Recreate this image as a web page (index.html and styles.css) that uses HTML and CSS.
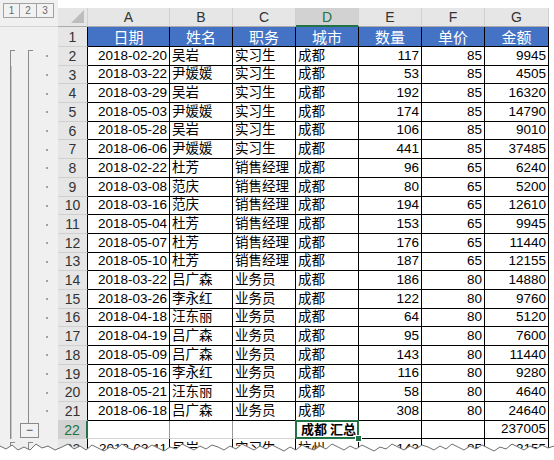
FILE: index.html
```html
<!DOCTYPE html>
<html lang="zh-CN">
<head>
<meta charset="utf-8">
<title>Sheet</title>
<link rel="stylesheet" href="styles.css">
</head>
<body>
<div class="frame">
<div class="sheet">
  <div class="ol-top">
    <div class="levels"><span class="lv">1</span><span class="lv">2</span><span class="lv">3</span></div>
  </div>
  <div class="strip"></div>
  <div class="corner"><span class="tri"></span></div>
  <div class="ch">A</div><div class="ch">B</div><div class="ch">C</div><div class="ch sel">D</div><div class="ch">E</div><div class="ch">F</div><div class="ch">G</div>

  <div class="ol ol-plain"></div><div class="rh">1</div>
  <div class="h">日期</div><div class="h">姓名</div><div class="h">职务</div><div class="h">城市</div><div class="h">数量</div><div class="h">单价</div><div class="h">金额</div>

  <div class="ol first"><i class="dot"></i></div><div class="rh">2</div>
  <div class="c r">2018-02-20</div><div class="c">吴岩</div><div class="c">实习生</div><div class="c">成都</div><div class="c r">117</div><div class="c r">85</div><div class="c r">9945</div>

  <div class="ol"><i class="dot"></i></div><div class="rh">3</div>
  <div class="c r">2018-03-22</div><div class="c">尹媛媛</div><div class="c">实习生</div><div class="c">成都</div><div class="c r">53</div><div class="c r">85</div><div class="c r">4505</div>

  <div class="ol"><i class="dot"></i></div><div class="rh">4</div>
  <div class="c r">2018-03-29</div><div class="c">吴岩</div><div class="c">实习生</div><div class="c">成都</div><div class="c r">192</div><div class="c r">85</div><div class="c r">16320</div>

  <div class="ol"><i class="dot"></i></div><div class="rh">5</div>
  <div class="c r">2018-05-03</div><div class="c">尹媛媛</div><div class="c">实习生</div><div class="c">成都</div><div class="c r">174</div><div class="c r">85</div><div class="c r">14790</div>

  <div class="ol"><i class="dot"></i></div><div class="rh">6</div>
  <div class="c r">2018-05-28</div><div class="c">吴岩</div><div class="c">实习生</div><div class="c">成都</div><div class="c r">106</div><div class="c r">85</div><div class="c r">9010</div>

  <div class="ol"><i class="dot"></i></div><div class="rh">7</div>
  <div class="c r">2018-06-06</div><div class="c">尹媛媛</div><div class="c">实习生</div><div class="c">成都</div><div class="c r">441</div><div class="c r">85</div><div class="c r">37485</div>

  <div class="ol"><i class="dot"></i></div><div class="rh">8</div>
  <div class="c r">2018-02-22</div><div class="c">杜芳</div><div class="c">销售经理</div><div class="c">成都</div><div class="c r">96</div><div class="c r">65</div><div class="c r">6240</div>

  <div class="ol"><i class="dot"></i></div><div class="rh">9</div>
  <div class="c r">2018-03-08</div><div class="c">范庆</div><div class="c">销售经理</div><div class="c">成都</div><div class="c r">80</div><div class="c r">65</div><div class="c r">5200</div>

  <div class="ol"><i class="dot"></i></div><div class="rh">10</div>
  <div class="c r">2018-03-16</div><div class="c">范庆</div><div class="c">销售经理</div><div class="c">成都</div><div class="c r">194</div><div class="c r">65</div><div class="c r">12610</div>

  <div class="ol"><i class="dot"></i></div><div class="rh">11</div>
  <div class="c r">2018-05-04</div><div class="c">杜芳</div><div class="c">销售经理</div><div class="c">成都</div><div class="c r">153</div><div class="c r">65</div><div class="c r">9945</div>

  <div class="ol"><i class="dot"></i></div><div class="rh">12</div>
  <div class="c r">2018-05-07</div><div class="c">杜芳</div><div class="c">销售经理</div><div class="c">成都</div><div class="c r">176</div><div class="c r">65</div><div class="c r">11440</div>

  <div class="ol"><i class="dot"></i></div><div class="rh">13</div>
  <div class="c r">2018-05-10</div><div class="c">杜芳</div><div class="c">销售经理</div><div class="c">成都</div><div class="c r">187</div><div class="c r">65</div><div class="c r">12155</div>

  <div class="ol"><i class="dot"></i></div><div class="rh">14</div>
  <div class="c r">2018-03-22</div><div class="c">吕广森</div><div class="c">业务员</div><div class="c">成都</div><div class="c r">186</div><div class="c r">80</div><div class="c r">14880</div>

  <div class="ol"><i class="dot"></i></div><div class="rh">15</div>
  <div class="c r">2018-03-26</div><div class="c">李永红</div><div class="c">业务员</div><div class="c">成都</div><div class="c r">122</div><div class="c r">80</div><div class="c r">9760</div>

  <div class="ol"><i class="dot"></i></div><div class="rh">16</div>
  <div class="c r">2018-04-18</div><div class="c">汪东丽</div><div class="c">业务员</div><div class="c">成都</div><div class="c r">64</div><div class="c r">80</div><div class="c r">5120</div>

  <div class="ol"><i class="dot"></i></div><div class="rh">17</div>
  <div class="c r">2018-04-19</div><div class="c">吕广森</div><div class="c">业务员</div><div class="c">成都</div><div class="c r">95</div><div class="c r">80</div><div class="c r">7600</div>

  <div class="ol"><i class="dot"></i></div><div class="rh">18</div>
  <div class="c r">2018-05-09</div><div class="c">吕广森</div><div class="c">业务员</div><div class="c">成都</div><div class="c r">143</div><div class="c r">80</div><div class="c r">11440</div>

  <div class="ol"><i class="dot"></i></div><div class="rh">19</div>
  <div class="c r">2018-05-16</div><div class="c">李永红</div><div class="c">业务员</div><div class="c">成都</div><div class="c r">116</div><div class="c r">80</div><div class="c r">9280</div>

  <div class="ol"><i class="dot"></i></div><div class="rh">20</div>
  <div class="c r">2018-05-21</div><div class="c">汪东丽</div><div class="c">业务员</div><div class="c">成都</div><div class="c r">58</div><div class="c r">80</div><div class="c r">4640</div>

  <div class="ol"><i class="dot"></i></div><div class="rh">21</div>
  <div class="c r">2018-06-18</div><div class="c">吕广森</div><div class="c">业务员</div><div class="c">成都</div><div class="c r">308</div><div class="c r">80</div><div class="c r">24640</div>

  <div class="ol ol-end"><span class="minus">−</span></div><div class="rh rh-sel">22</div>
  <div class="c g"></div><div class="c g"></div><div class="c g"></div><div class="c active"><b>成都 汇总</b><span class="handle"></span></div><div class="c"></div><div class="c"></div><div class="c r">237005</div>

  <div class="ol first"><i class="dot"></i></div><div class="rh">23</div>
  <div class="c r">2018-03-11</div><div class="c">吴岩</div><div class="c">实习生</div><div class="c">杭州</div><div class="c r">143</div><div class="c r">85</div><div class="c r">12155</div>
</div>
<svg class="tear" width="554" height="22" viewBox="0 0 554 22">
  <path class="tear-fill" d="M0 8 L6 11 L12 7 L18 12 L24 9 L30 12 L36 6 L42 10 L48 8 L55 12 L62 9 L68 6 L74 11 L80 8 L86 12 L92 7 L98 10 L104 13 L110 9 L116 11 L122 6 L128 10 L134 12 L140 8 L146 11 L152 7 L158 10 L164 13 L170 9 L176 11 L182 6 L188 9 L194 12 L200 8 L206 11 L212 7 L218 9 L224 12 L230 8 L236 11 L242 6 L248 9 L254 12 L260 8 L266 11 L272 7 L278 10 L284 13 L290 9 L296 12 L302 7 L308 10 L314 12 L320 8 L326 11 L332 6 L338 9 L344 12 L350 8 L356 11 L362 7 L368 10 L374 13 L380 9 L386 11 L392 6 L398 9 L404 12 L410 8 L416 11 L422 7 L428 9 L434 12 L440 8 L446 11 L452 6 L458 9 L464 12 L470 8 L476 11 L482 7 L488 10 L494 13 L500 9 L506 11 L512 6 L518 9 L524 12 L530 8 L536 11 L542 7 L548 10 L554 8 L554 22 L0 22 Z"/>
  <path class="tear-line" d="M0 8 L6 11 L12 7 L18 12 L24 9 L30 12 L36 6 L42 10 L48 8 L55 12 L62 9 L68 6 L74 11 L80 8 L86 12 L92 7 L98 10 L104 13 L110 9 L116 11 L122 6 L128 10 L134 12 L140 8 L146 11 L152 7 L158 10 L164 13 L170 9 L176 11 L182 6 L188 9 L194 12 L200 8 L206 11 L212 7 L218 9 L224 12 L230 8 L236 11 L242 6 L248 9 L254 12 L260 8 L266 11 L272 7 L278 10 L284 13 L290 9 L296 12 L302 7 L308 10 L314 12 L320 8 L326 11 L332 6 L338 9 L344 12 L350 8 L356 11 L362 7 L368 10 L374 13 L380 9 L386 11 L392 6 L398 9 L404 12 L410 8 L416 11 L422 7 L428 9 L434 12 L440 8 L446 11 L452 6 L458 9 L464 12 L470 8 L476 11 L482 7 L488 10 L494 13 L500 9 L506 11 L512 6 L518 9 L524 12 L530 8 L536 11 L542 7 L548 10 L554 8"/>
</svg>
</div>
</body>
</html>
```

FILE: styles.css
```css
html, body {
  margin: 0;
  padding: 0;
  background: #ffffff;
}

.frame {
  position: relative;
  width: 554px;
  height: 460px;
  overflow: hidden;
  background: #ffffff;
}

.sheet {
  display: grid;
  grid-template-columns: 58px 30px 82px 63px 63px 63px 63px 63px 64px;
  grid-template-rows: 8px 19px 20px repeat(21, 18.7px) 20px;
  font-family: "Liberation Sans", "Noto Sans CJK SC", sans-serif;
  font-size: 13.5px;
  color: #000;
}

.sheet > div {
  box-sizing: border-box;
  min-width: 0;
  overflow: hidden;
  white-space: nowrap;
}

/* top-left: outline level buttons */
.ol-top {
  grid-row: 1 / 3;
  grid-column: 1;
  background: #f0f0f0;
  padding: 3px 0 0 3px;
  border-bottom: 1px solid #d4d4d4;
}

.levels {
  display: flex;
}

.lv {
  box-sizing: border-box;
  width: 17px;
  height: 15px;
  border: 1px solid #a2a2a2;
  margin-right: 0;
  background: #f2f2f2;
  color: #6b6b6b;
  font-size: 10px;
  line-height: 13px;
  text-align: center;
}

.lv + .lv {
  border-left: none;
  width: 17px;
}

.strip {
  grid-column: 2 / 10;
  background: #ffffff;
}

.corner {
  background: #e6e6e6;
  border-right: 1px solid #d0d0d0;
  border-bottom: 1px solid #ababab;
  display: flex;
  justify-content: flex-end;
  align-items: flex-end;
  padding: 0 3px 3px 0;
}

.tri {
  width: 0;
  height: 0;
  border-left: 13px solid transparent;
  border-bottom: 13px solid #bdbdbd;
}

.ch {
  background: #e6e6e6;
  border-right: 1px solid #d0d0d0;
  border-bottom: 1px solid #ababab;
  color: #333;
  font-size: 14px;
  display: flex;
  align-items: center;
  justify-content: center;
}

.ch.sel {
  background: #d2d2d2;
  color: #217346;
  border-bottom: 2px solid #217346;
}

/* outline column */
.ol {
  background:
    linear-gradient(#8a8a8a, #8a8a8a) 10px 0 / 1px 100% no-repeat,
    linear-gradient(#c8c8c8, #c8c8c8) 11px 0 / 1px 100% no-repeat,
    linear-gradient(#8a8a8a, #8a8a8a) 28px 0 / 1px 100% no-repeat,
    #f0f0f0;
  display: flex;
  align-items: center;
  padding-left: 46px;
}

.ol-plain {
  background: #f0f0f0;
}

.ol.first {
  background:
    linear-gradient(#8a8a8a, #8a8a8a) 10px 3px / 1px 100% no-repeat,
    linear-gradient(#8a8a8a, #8a8a8a) 10px 3px / 5px 1px no-repeat,
    linear-gradient(#8a8a8a, #8a8a8a) 28px 3px / 1px 100% no-repeat,
    linear-gradient(#8a8a8a, #8a8a8a) 28px 3px / 5px 1px no-repeat,
    #f0f0f0;
}

.ol.ol-end {
  background:
    linear-gradient(#8a8a8a, #8a8a8a) 10px 0 / 1px 100% no-repeat,
    linear-gradient(#c8c8c8, #c8c8c8) 11px 0 / 1px 100% no-repeat,
    linear-gradient(#8a8a8a, #8a8a8a) 28px 0 / 1px 3px no-repeat,
    #f0f0f0;
  padding-left: 20px;
}

.dot {
  display: block;
  width: 2px;
  height: 2px;
  background: #a0a0a0;
}

.minus {
  box-sizing: border-box;
  display: flex;
  align-items: center;
  justify-content: center;
  width: 19px;
  height: 15px;
  border: 1px solid #8a8a8a;
  background: #f2f2f2;
  color: #444;
  font-size: 12px;
  line-height: 1;
}

/* row header */
.rh {
  background: #e6e6e6;
  border-right: 1px solid #000;
  border-bottom: 1px solid #d0d0d0;
  color: #333;
  font-size: 14px;
  display: flex;
  align-items: center;
  justify-content: center;
}

.rh-sel {
  background: #d2d2d2;
  color: #217346;
  border-right: 2px solid #217346;
}

/* header row (blue) */
.h {
  background: #4472c4;
  color: #ffffff;
  font-family: "Noto Sans CJK SC", sans-serif;
  font-size: 15px;
  border-right: 1px solid #000;
  border-bottom: 1px solid #000;
  display: flex;
  align-items: center;
  justify-content: center;
}

/* data cells */
.c {
  border-right: 1px solid #000;
  border-bottom: 1px solid #000;
  display: flex;
  align-items: flex-end;
  padding: 0 2px 1px 2px;
  line-height: 16px;
  position: relative;
}

.c.r {
  justify-content: flex-end;
}

.c.g {
  border-right: 1px solid #9a9a9a;
  border-bottom: 1px solid #d4d4d4;
}

.c.active {
  overflow: visible;
  border-bottom: 1px solid #d4d4d4;
}

.c.active b {
  font-weight: 700;
  font-family: "Noto Sans CJK SC", sans-serif;
  font-size: 13px;
  padding-left: 3px;
}

.c.active::before {
  content: "";
  position: absolute;
  left: -1px;
  top: -1px;
  right: -1px;
  bottom: -1px;
  border: 2px solid #217346;
}

.handle {
  position: absolute;
  right: -4px;
  bottom: -4px;
  width: 5px;
  height: 5px;
  background: #217346;
  border: 1px solid #ffffff;
  z-index: 2;
}

/* torn bottom edge */
.tear {
  position: absolute;
  left: 0;
  bottom: 0;
  display: block;
}

.tear-fill {
  fill: #ffffff;
}

.tear-line {
  fill: none;
  stroke: #6e6e6e;
  stroke-width: 1;
}
```
